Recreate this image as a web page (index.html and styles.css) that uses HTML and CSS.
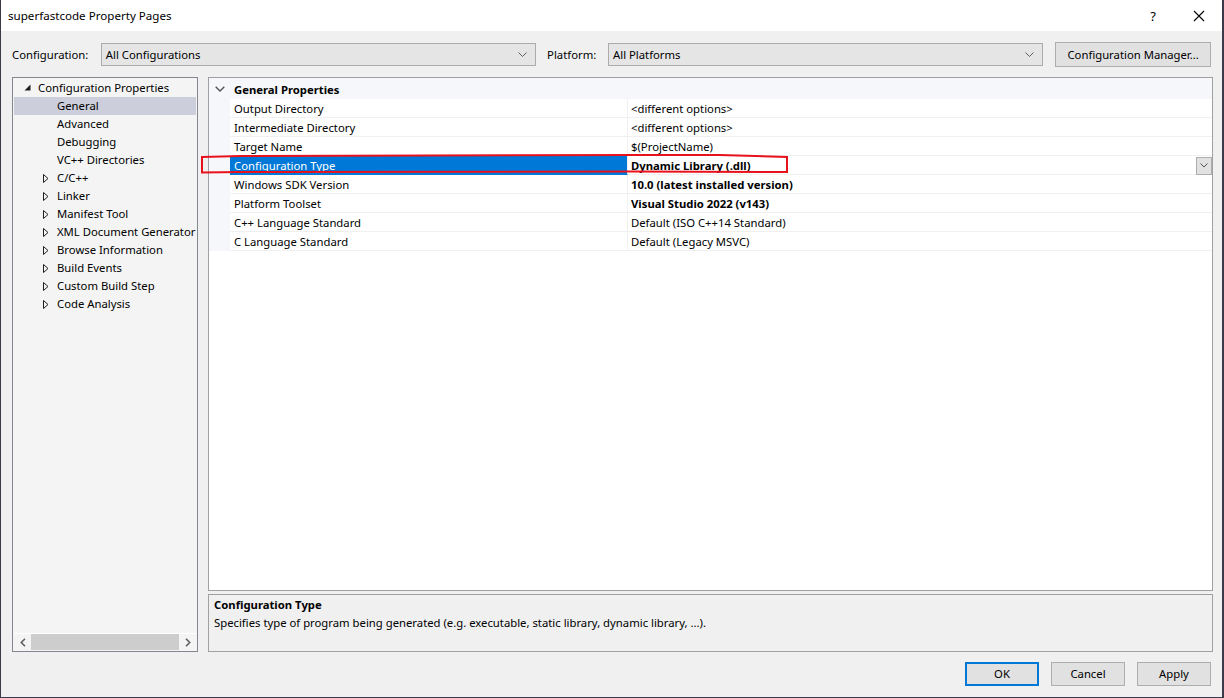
FILE: index.html
```html
<!DOCTYPE html>
<html lang="en">
<head>
<meta charset="utf-8">
<title>superfastcode Property Pages</title>
<link rel="stylesheet" href="styles.css">
</head>
<body>
<div class="window">
  <header class="titlebar">
    <span class="title">superfastcode Property Pages</span>
    <div class="caption">
      <span class="cap-btn help">?</span>
      <span class="cap-btn close">
        <svg width="12" height="12" viewBox="0 0 12 12"><path d="M1 1 L11 11 M11 1 L1 11" stroke="#000" stroke-width="1.1" fill="none"/></svg>
      </span>
    </div>
  </header>

  <div class="toolbar">
    <span class="lbl lbl-config">Configuration:</span>
    <div class="combo">
      <span class="combo-text">All Configurations</span>
      <svg class="combo-arrow" width="9" height="5" viewBox="0 0 9 5"><path d="M0.5 0.5 L4.5 4.5 L8.5 0.5" stroke="#606060" stroke-width="1" fill="none"/></svg>
    </div>
    <span class="lbl lbl-platform">Platform:</span>
    <div class="combo">
      <span class="combo-text">All Platforms</span>
      <svg class="combo-arrow" width="9" height="5" viewBox="0 0 9 5"><path d="M0.5 0.5 L4.5 4.5 L8.5 0.5" stroke="#606060" stroke-width="1" fill="none"/></svg>
    </div>
    <button class="btn btn-manager">Configuration Manager...</button>
  </div>

  <div class="main">
    <div class="tree">
      <ul class="tree-list">
        <li class="tree-item root"><span class="twisty"><svg width="7" height="7" viewBox="0 0 7 7"><path d="M6.5 0.5 L6.5 6.5 L0.5 6.5 Z" fill="#1e1e1e"/></svg></span>Configuration Properties</li>
        <li class="tree-item child selected"><span class="twisty"></span>General</li>
        <li class="tree-item child"><span class="twisty"></span>Advanced</li>
        <li class="tree-item child"><span class="twisty"></span>Debugging</li>
        <li class="tree-item child"><span class="twisty"></span>VC++ Directories</li>
        <li class="tree-item child"><span class="twisty"><svg width="6" height="9" viewBox="0 0 6 9"><path d="M0.5 0.5 L5 4.5 L0.5 8.5 Z" fill="none" stroke="#1e1e1e" stroke-width="1"/></svg></span>C/C++</li>
        <li class="tree-item child"><span class="twisty"><svg width="6" height="9" viewBox="0 0 6 9"><path d="M0.5 0.5 L5 4.5 L0.5 8.5 Z" fill="none" stroke="#1e1e1e" stroke-width="1"/></svg></span>Linker</li>
        <li class="tree-item child"><span class="twisty"><svg width="6" height="9" viewBox="0 0 6 9"><path d="M0.5 0.5 L5 4.5 L0.5 8.5 Z" fill="none" stroke="#1e1e1e" stroke-width="1"/></svg></span>Manifest Tool</li>
        <li class="tree-item child"><span class="twisty"><svg width="6" height="9" viewBox="0 0 6 9"><path d="M0.5 0.5 L5 4.5 L0.5 8.5 Z" fill="none" stroke="#1e1e1e" stroke-width="1"/></svg></span>XML Document Generator</li>
        <li class="tree-item child"><span class="twisty"><svg width="6" height="9" viewBox="0 0 6 9"><path d="M0.5 0.5 L5 4.5 L0.5 8.5 Z" fill="none" stroke="#1e1e1e" stroke-width="1"/></svg></span>Browse Information</li>
        <li class="tree-item child"><span class="twisty"><svg width="6" height="9" viewBox="0 0 6 9"><path d="M0.5 0.5 L5 4.5 L0.5 8.5 Z" fill="none" stroke="#1e1e1e" stroke-width="1"/></svg></span>Build Events</li>
        <li class="tree-item child"><span class="twisty"><svg width="6" height="9" viewBox="0 0 6 9"><path d="M0.5 0.5 L5 4.5 L0.5 8.5 Z" fill="none" stroke="#1e1e1e" stroke-width="1"/></svg></span>Custom Build Step</li>
        <li class="tree-item child"><span class="twisty"><svg width="6" height="9" viewBox="0 0 6 9"><path d="M0.5 0.5 L5 4.5 L0.5 8.5 Z" fill="none" stroke="#1e1e1e" stroke-width="1"/></svg></span>Code Analysis</li>
      </ul>
      <div class="hscroll">
        <span class="sb-btn"><svg width="6" height="9" viewBox="0 0 6 9"><path d="M5 0.8 L1.3 4.5 L5 8.2" stroke="#606060" stroke-width="1.6" fill="none"/></svg></span>
        <span class="sb-thumb"></span>
        <span class="sb-btn"><svg width="6" height="9" viewBox="0 0 6 9"><path d="M1 0.8 L4.7 4.5 L1 8.2" stroke="#606060" stroke-width="1.6" fill="none"/></svg></span>
      </div>
    </div>

    <div class="right">
      <div class="grid">
        <div class="grid-header">
          <span class="gutter-cell"><svg width="10" height="6" viewBox="0 0 10 6"><path d="M0.7 0.7 L5 5 L9.3 0.7" stroke="#505050" stroke-width="1.3" fill="none"/></svg></span>
          <span class="header-text">General Properties</span>
        </div>
        <div class="grid-row"><span class="gutter"></span><span class="name">Output Directory</span><span class="value">&lt;different options&gt;</span></div>
        <div class="grid-row"><span class="gutter"></span><span class="name">Intermediate Directory</span><span class="value">&lt;different options&gt;</span></div>
        <div class="grid-row"><span class="gutter"></span><span class="name">Target Name</span><span class="value">$(ProjectName)</span></div>
        <div class="grid-row selected"><span class="gutter"></span><span class="name">Configuration Type</span><span class="value bold">Dynamic Library (.dll)<span class="drop"><svg width="8" height="5" viewBox="0 0 8 5"><path d="M0.5 0.5 L4 4 L7.5 0.5" stroke="#505050" stroke-width="1" fill="none"/></svg></span></span></div>
        <div class="grid-row"><span class="gutter"></span><span class="name">Windows SDK Version</span><span class="value bold">10.0 (latest installed version)</span></div>
        <div class="grid-row"><span class="gutter"></span><span class="name">Platform Toolset</span><span class="value bold">Visual Studio 2022 (v143)</span></div>
        <div class="grid-row"><span class="gutter"></span><span class="name">C++ Language Standard</span><span class="value">Default (ISO C++14 Standard)</span></div>
        <div class="grid-row"><span class="gutter"></span><span class="name">C Language Standard</span><span class="value">Default (Legacy MSVC)</span></div>
      </div>
      <div class="desc">
        <div class="desc-title">Configuration Type</div>
        <div class="desc-text">Specifies type of program being generated (e.g. executable, static library, dynamic library, ...).</div>
      </div>
    </div>
  </div>

  <div class="footer">
    <button class="btn btn-dialog default">OK</button>
    <button class="btn btn-dialog">Cancel</button>
    <button class="btn btn-dialog">Apply</button>
  </div>

  <svg class="annot" width="1224" height="698" viewBox="0 0 1224 698">
    <path d="M202 157 L241 156 L630 155 L720 155 L787 157 L787 172 L630 171.5 L240 172 L202 172.5 Z" fill="none" stroke="#e8121c" stroke-width="2"/>
  </svg>
</div>
</body>
</html>
```
FILE: styles.css
```css
* { box-sizing: border-box; }

html, body {
  margin: 0;
  padding: 0;
}

body {
  width: 1224px;
  height: 698px;
  overflow: hidden;
  font-family: "Noto Sans", "Open Sans", sans-serif;
  font-size: 11.3px;
  color: #000;
  background: #f0f0f0;
}

.window {
  position: relative;
  width: 1224px;
  height: 698px;
  background: #f0f0f0;
  border-left: 1px solid #3a3a4a;
  border-right: 2px solid #3a3a4a;
  border-bottom: 1px solid #3a3a4a;
  display: flex;
  flex-direction: column;
}

/* title bar */
.titlebar {
  height: 31px;
  flex: none;
  background: #fff;
  display: flex;
  align-items: center;
  padding-left: 7px;
}

.title {
  flex: 1;
  font-size: 11.6px;
}

.caption {
  display: flex;
  height: 100%;
}

.cap-btn {
  width: 46px;
  height: 100%;
  display: flex;
  align-items: center;
  justify-content: center;
}

.help {
  font-size: 13px;
}

/* toolbar */
.toolbar {
  height: 46px;
  flex: none;
  display: flex;
  align-items: center;
  padding: 11px 11px 10px 11px;
}

.lbl {
  padding-bottom: 1px;
}

.lbl-config { width: 89px; }
.lbl-platform { width: 61px; margin-left: 11px; }

.combo {
  width: 436px;
  height: 23px;
  background: #e5e5e5;
  border: 1px solid #acacac;
  display: flex;
  align-items: center;
  padding: 0 4px 1px 4px;
}

.combo-text { flex: 1; }

.combo-arrow { margin-right: 4px; margin-top: 1px; }

.btn {
  font-family: inherit;
  font-size: 11.3px;
  color: #000;
  background: #e1e1e1;
  border: 1px solid #adadad;
  padding: 0 0 1px 0;
  margin: 0;
}

.btn-manager {
  width: 156px;
  height: 25px;
  margin-left: 12px;
}

/* main */
.main {
  height: 575px;
  flex: none;
  display: flex;
  padding-left: 11px;
  gap: 10px;
}

.tree {
  width: 186px;
  height: 575px;
  border: 1px solid #828790;
  background: #f4f4f4;
  padding: 1px;
  display: flex;
  flex-direction: column;
}

.tree-list {
  flex: 1;
  list-style: none;
  margin: 0;
  padding: 0;
}

.tree-item {
  height: 18px;
  display: flex;
  align-items: center;
  white-space: nowrap;
  overflow: hidden;
  padding-bottom: 2px;
}

.tree-item.root { padding-left: 10px; }
.tree-item.child { padding-left: 29px; }

.twisty {
  width: 14px;
  height: 16px;
  flex: none;
  display: flex;
  align-items: center;
}

.tree-item.root .twisty { padding-top: 1px; }
.tree-item.child .twisty { padding-top: 2px; }

.tree-item.selected {
  background: #cccedb;
}

.hscroll {
  height: 17px;
  flex: none;
  display: flex;
  align-items: stretch;
  border-top: 1px solid #fff;
}

.sb-btn {
  width: 17px;
  flex: none;
  display: flex;
  align-items: center;
  justify-content: center;
}

.sb-thumb {
  flex: 1;
  background: #cdcdcd;
}

/* right column */
.right {
  width: 1005px;
  display: flex;
  flex-direction: column;
  gap: 3px;
}

.grid {
  height: 514px;
  flex: none;
  border: 1px solid #a0a0a0;
  background: #fff;
}

.grid-header {
  height: 21px;
  display: flex;
  align-items: center;
  background: #f5f7fa;
  font-weight: bold;
}

.gutter-cell {
  width: 21px;
  display: flex;
  align-items: center;
  justify-content: center;
  padding-left: 1px;
}

.header-text { padding-left: 4px; padding-top: 1px; }

.grid-row {
  height: 19px;
  display: flex;
}

.gutter {
  width: 21px;
  flex: none;
  background: #f5f7fa;
}

.name {
  width: 398px;
  flex: none;
  padding-left: 4px;
  border-bottom: 1px solid #f0f0f0;
  border-right: 1px solid #f0f0f0;
  display: flex;
  align-items: center;
  white-space: nowrap;
}

.value {
  flex: 1;
  padding-left: 3px;
  border-bottom: 1px solid #f0f0f0;
  display: flex;
  align-items: center;
  white-space: nowrap;
}

.bold { font-weight: bold; }

.grid-row.selected .name {
  background: #0078d7;
  color: #fff;
  border-bottom-color: #0078d7;
}

.drop {
  margin-left: auto;
  width: 16px;
  height: 18px;
  margin-top: 1px;
  background: #e1e1e1;
  border: 1px solid #adadad;
  display: flex;
  align-items: center;
  justify-content: center;
}

.desc {
  height: 58px;
  flex: none;
  border: 1px solid #a0a0a0;
  background: #f0f0f0;
  padding: 1px 5px 0 5px;
  line-height: 18px;
}

.desc-title { font-weight: bold; }

/* footer */
.footer {
  flex: 1;
  display: flex;
  justify-content: flex-end;
  align-items: flex-start;
  gap: 12px;
  padding: 10px 11px 0 0;
}

.btn-dialog {
  width: 74px;
  height: 24px;
}

.btn-dialog.default {
  border: 2px solid #0078d7;
}

.annot {
  position: absolute;
  left: -1px;
  top: 0;
  pointer-events: none;
}
```
